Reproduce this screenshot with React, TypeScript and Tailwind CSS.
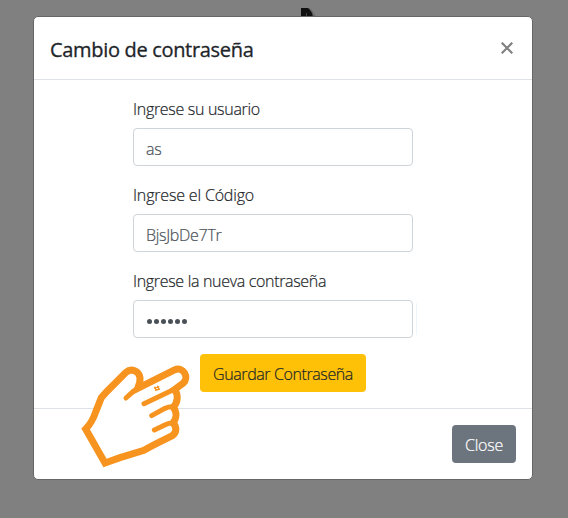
import type { ReactNode } from "react";

function Field({ label, tracking, type = "text", value }: { label: string; tracking: string; type?: string; value: string }) {
  return (
    <div className="mb-4">
      <label className={`mb-2 block h-6 whitespace-nowrap pt-px text-[16px] leading-6 ${tracking}`}>{label}</label>
      {type === "password" ? (
        <div className="flex h-[38px] w-[280px] items-center gap-[2px] rounded-[4px] border border-[#ced4da] bg-white pl-[13px] pt-[5px]">
          {value.split("").map((_, i) => (
            <span key={i} className="size-[5px] rounded-full bg-[#495057]" />
          ))}
        </div>
      ) : (
        <input
          readOnly
          type={type}
          defaultValue={value}
          className="block h-[38px] w-[280px] rounded-[4px] border border-[#ced4da] bg-white px-3 pt-1 text-[16px] font-light tracking-[-0.3px] text-[#495057] outline-none [-webkit-text-stroke:0.2px]"
        />
      )}
    </div>
  );
}

function Button({ className, children }: { className: string; children: ReactNode }) {
  return (
    <button className={`flex h-[38px] items-center justify-center whitespace-nowrap rounded-[4px] pt-0.5 text-[16px] font-light [-webkit-text-stroke:0.2px] ${className}`}>
      {children}
    </button>
  );
}

function PointingHand() {
  return (
    <svg className="absolute left-[36px] top-[328px]" width="150" height="135" viewBox="0 0 450 405" fill="none" stroke="#f79420" strokeWidth="21" strokeLinejoin="miter">
      <path
        fill="#fff"
        d="M203 130L315 74C338 64 360 96 339 115L313 134C326 148 324 171 310 187C321 201 320 220 309 234C322 247 319 263 307 272C282 285 255 297 222 316L150 338L105 354L47 252C60 239 70 222 77 201L94 158L110 140L168 82C184 68 207 78 210 98C211 110 207 121 203 130Z"
      />
      <path strokeWidth="15" strokeLinecap="round" d="M168 159L190 139L205 129M222 176L313 133M245 212L285 190Q299 184 310 186M253 255L286 239Q299 233 309 234" />
      <path strokeWidth="4" d="M254 125L259 137M262 122L267 134M252 129L268 125M255 136L270 132" />
    </svg>
  );
}

export default function App() {
  return (
    <div className="relative h-[518px] w-[568px] overflow-hidden bg-[#808080] px-[33px] pt-4 font-['Open_Sans','Noto_Sans',sans-serif] text-[#212529]">
      <svg className="absolute left-[299px] top-[6px]" width="20" height="12" viewBox="0 0 20 12">
        <path d="M4 2H10Q14 4 17 11H4Z" fill="#555" opacity=".5" />
        <path d="M2 2H9Q13 5 14 11H2Z" fill="#111" />
        <path d="M7 7H8V11H7Z" fill="#444" />
      </svg>
      <div className="relative h-[464px] w-[500px] rounded-[5px] border border-[#666] bg-white font-light [-webkit-text-stroke:0.2px]">
        <header className="flex h-[63px] items-center justify-between border-b border-[#dee2e6] px-4">
          <h5 className="pt-1 text-[20px] font-medium leading-[30px] tracking-[-0.32px] [-webkit-text-stroke:0.3px]">Cambio de contraseña</h5>
          <button aria-label="Close" className="mr-[3px]">
            <svg width="12" height="12" viewBox="0 0 12 12" stroke="#808080" strokeWidth="2.2"><path d="M.7 .7L11.3 11.3M11.3 .7L.7 11.3" /></svg>
          </button>
        </header>
        <main className="h-[328px] pl-[99px] pt-4">
          <Field label="Ingrese su usuario" tracking="tracking-[-0.3px]" value="as" />
          <Field label="Ingrese el Código" tracking="tracking-[-0.17px]" value="BjsJbDe7Tr" />
          <Field label="Ingrese la nueva contraseña" tracking="tracking-[-0.32px]" type="password" value="123456" />
          <Button className="ml-[67px] w-[166px] bg-[#ffc107] tracking-[-0.4px] text-[#212529]">Guardar Contraseña</Button>
        </main>
        <footer className="flex h-[71px] justify-end border-t border-[#dee2e6] px-4 pt-4">
          <Button className="w-16 bg-[#6c757d] tracking-[-0.2px] text-white">Close</Button>
        </footer>
        <span className="absolute left-[382px] top-[286px] h-8 w-px bg-[#eff5fd]" />
        <PointingHand />
      </div>
    </div>
  );
}
